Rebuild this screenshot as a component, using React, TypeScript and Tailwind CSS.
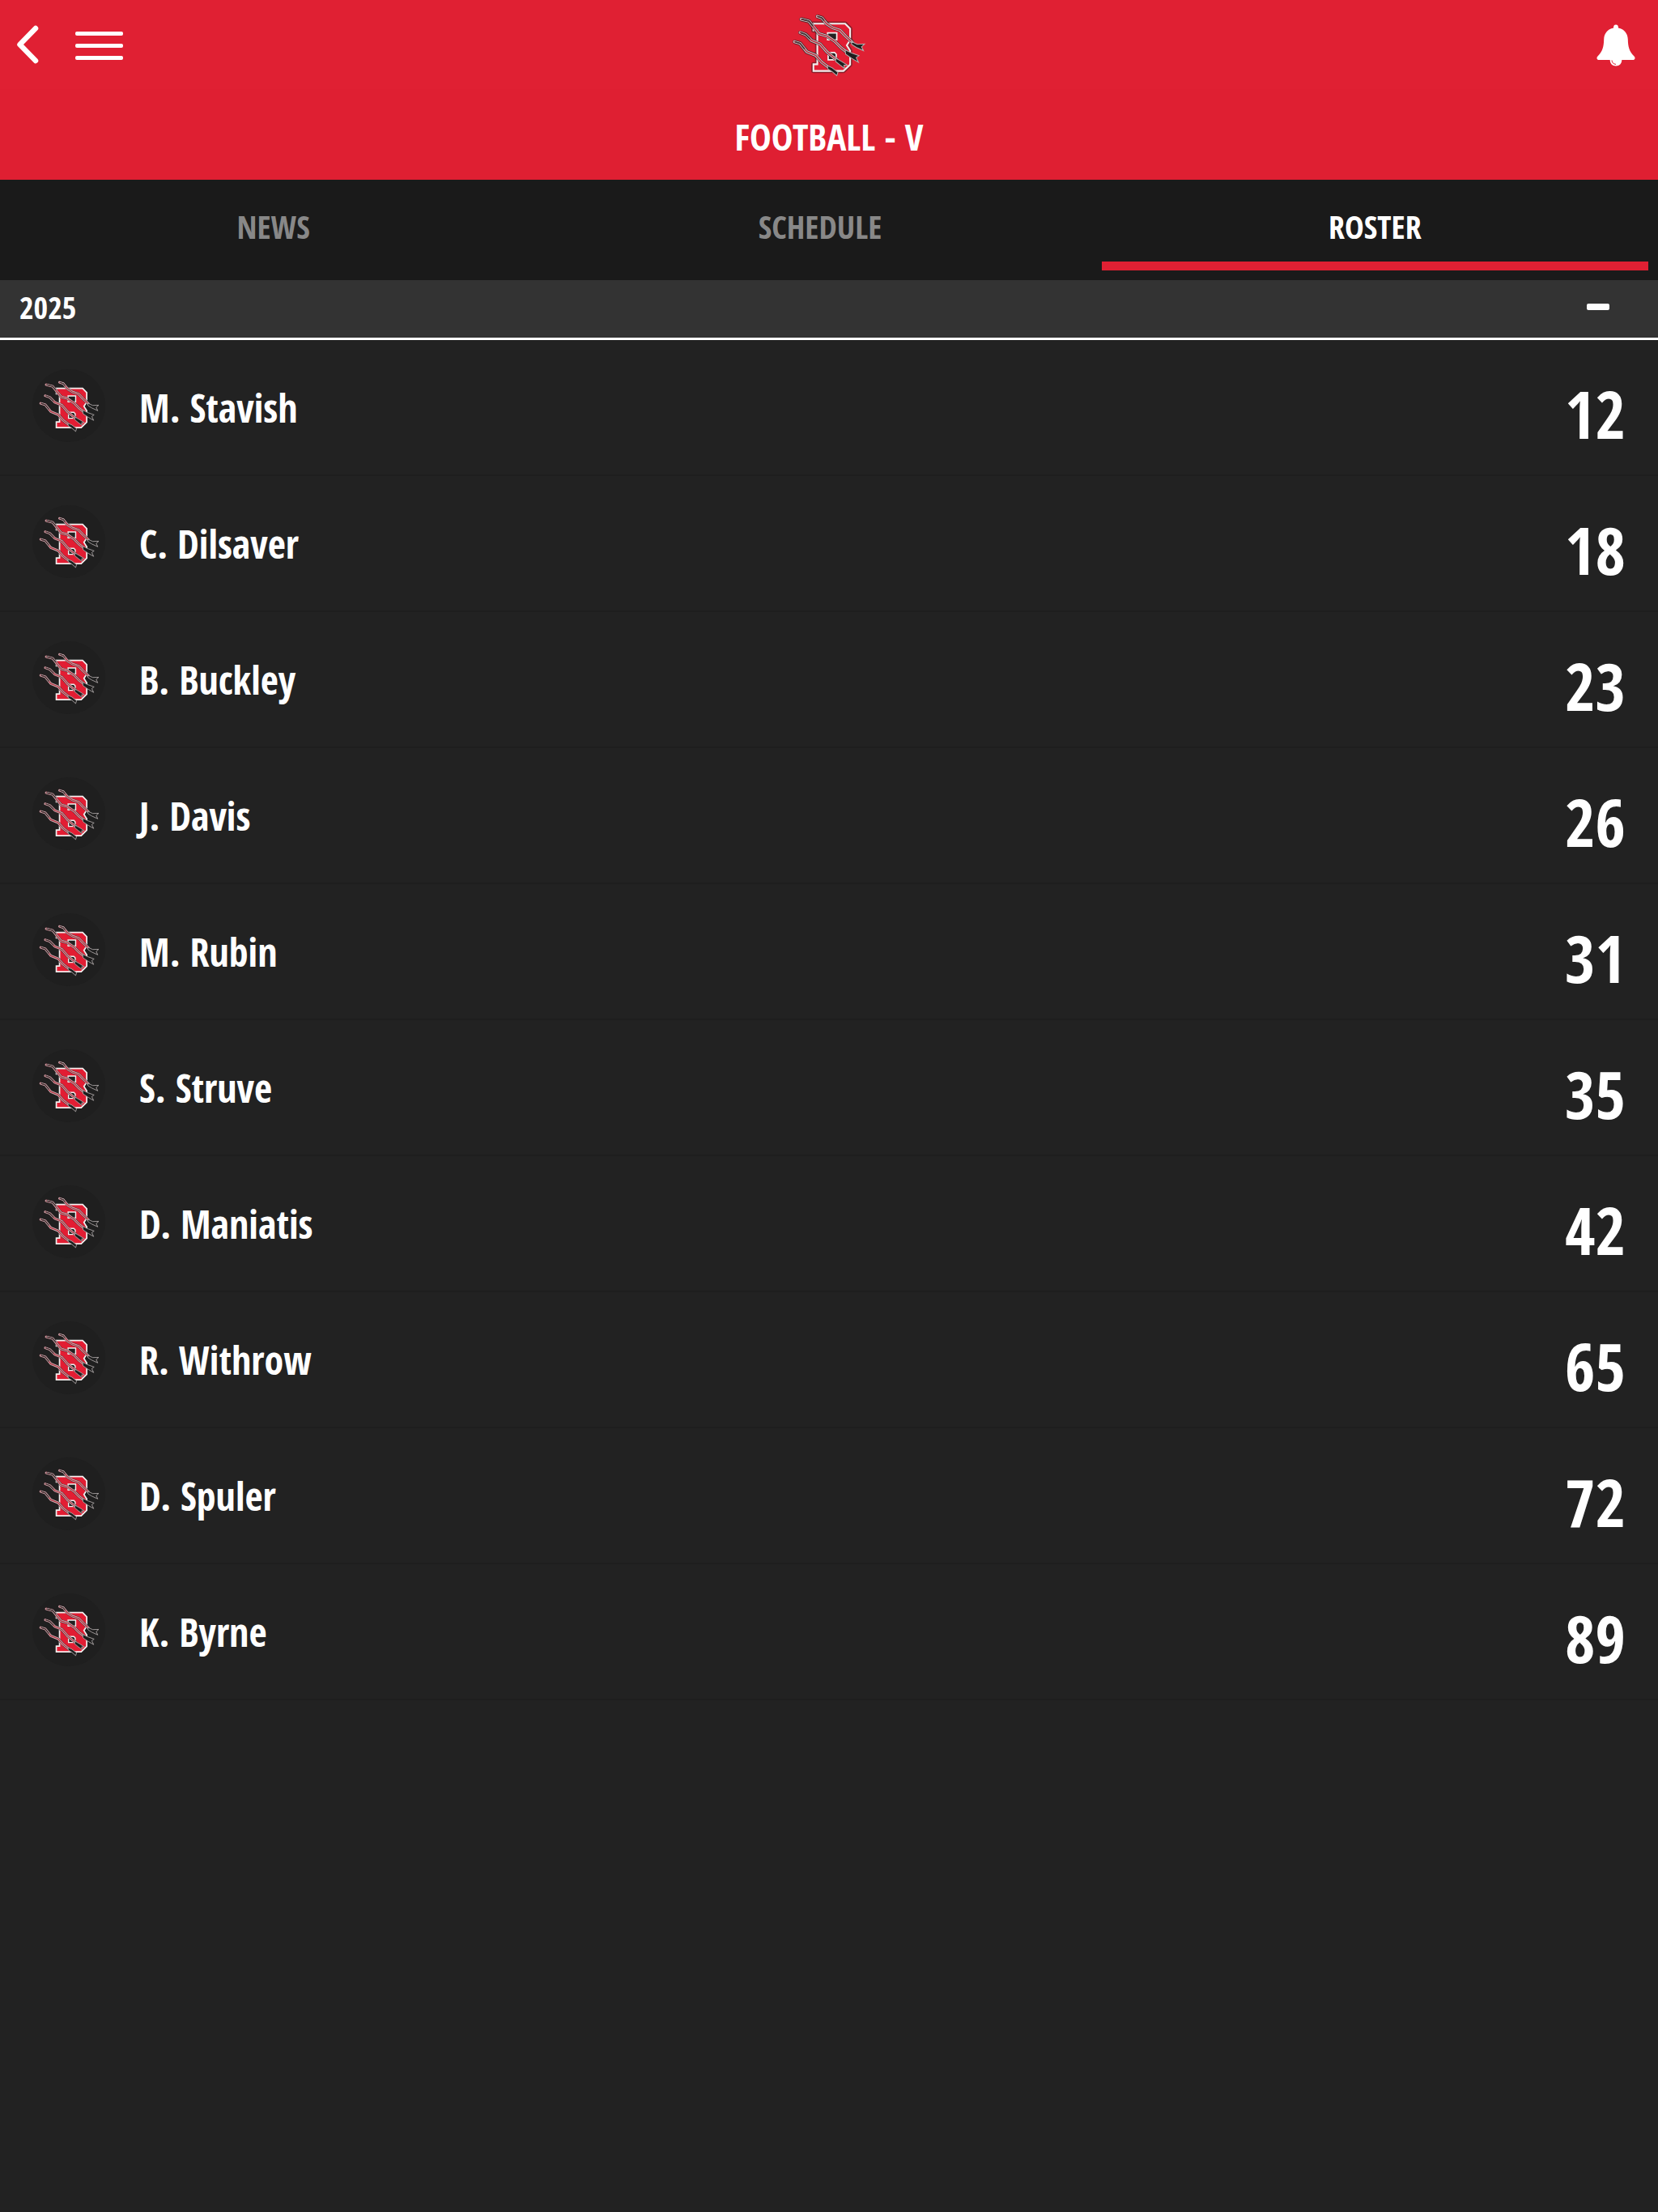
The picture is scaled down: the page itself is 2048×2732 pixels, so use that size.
import React from "react";

interface Player {
  name: string;
  number: number;
}

const players: Player[] = [
  { name: "M. Stavish", number: 12 },
  { name: "C. Dilsaver", number: 18 },
  { name: "B. Buckley", number: 23 },
  { name: "J. Davis", number: 26 },
  { name: "M. Rubin", number: 31 },
  { name: "S. Struve", number: 35 },
  { name: "D. Maniatis", number: 42 },
  { name: "R. Withrow", number: 65 },
  { name: "D. Spuler", number: 72 },
  { name: "K. Byrne", number: 89 },
];

// claw marks across the letter, and their dark torn ends
const scratches = [
  "M150 63 L166 68 L184 90 L205 104 L232 113 L252 134 L276 156",
  "M92 73 L120 80 L136 100 L156 125 L186 134 L212 152 L236 176 L254 190",
  "M88 121 L108 128 L130 150 L160 162 L184 190 L208 210 L220 218",
  "M68 154 L88 160 L112 190 L144 203 L166 228 L190 246",
];

const tips = [
  "M272 153 L294 163 L320 162 L309 172 L316 186 L290 174 L274 164 Z",
  "M250 183 L272 194 L300 204 L290 211 L298 228 L274 214 L252 199 Z",
  "M216 213 L236 224 L258 238 L246 238 L248 250 L232 238 L216 225 Z",
  "M186 240 L204 248 L224 264 L220 276 L204 262 L188 252 Z",
];

const letter = "M136 89 H250 L268 107 V148 L256 167 L268 186 V236 L244 259 H136 V235 H150 V113 H136 Z";

const TeamLogo: React.FC<{ className: string }> = ({ className }) => (
  <svg viewBox="58 48 268 232" className={className} fill="none" aria-hidden="true">
    <g stroke="#222" strokeOpacity="0.45" strokeWidth="16" strokeLinejoin="round">
      <path d={letter} />
      {scratches.map((d) => (
        <path key={d} d={d} />
      ))}
    </g>
    <path d={letter} fill="#e21d33" stroke="#f2efef" strokeWidth="6" />
    <path d="M187 122 H220 V147 H187 Z M189 193 H212 L218 199 V219 H189 Z" fill="#222" stroke="#f2efef" strokeWidth="5" />
    <g strokeLinejoin="round" strokeLinecap="round">
      {scratches.map((d) => (
        <path key={d} d={d} stroke="#4a1f27" strokeWidth="13" />
      ))}
      {scratches.map((d) => (
        <path key={d} d={d} stroke="#c4bebe" strokeWidth="10" />
      ))}
      {scratches.map((d) => (
        <path key={d} d={d} stroke="#b82839" strokeWidth="4" />
      ))}
    </g>
    <path
      d="M94 73 L120 80 L134 97 M90 121 L108 128 L124 144 M70 154 L88 160 L104 180 M152 63 L166 68 L174 78"
      stroke="#333"
      strokeWidth="4"
    />
    {tips.map((d) => (
      <path key={d} d={d} fill="#1d1d1d" stroke="#b3adad" strokeWidth="3" />
    ))}
  </svg>
);

const Header: React.FC = () => (
  <header className="text-white">
    <div className="grid h-[110px] grid-cols-3 items-center bg-[#e02033]">
      <div className="flex items-center gap-10 pl-[18px]">
        <button type="button" aria-label="Back">
          <svg viewBox="0 0 32 52" className="h-[52px] w-8" fill="none" stroke="currentColor" strokeWidth="6.500" strokeLinecap="round" strokeLinejoin="round">
            <path d="M26 6 L6.500 26 L26 46" />
          </svg>
        </button>
        <button type="button" aria-label="Menu" className="flex flex-col gap-2.5 pt-0.5 pl-[3px]">
          <span className="h-[5px] w-[59px] rounded-xs bg-white" />
          <span className="h-[5px] w-[59px] rounded-xs bg-white" />
          <span className="h-[5px] w-[59px] rounded-xs bg-white" />
        </button>
      </div>
      <TeamLogo className="h-20 w-[92px] justify-self-center" />
      <button type="button" aria-label="Notifications" className="mr-7 justify-self-end pt-0.5">
        <svg viewBox="0 0 48 52" className="h-[52px] w-12">
          <path
            d="M24 0.500 C26.200 0.500 27 2 27 4.500 C34.500 6 38.600 11.500 38.800 18.500 C39 28 40.500 33.500 46.500 39.500 C48.500 41.500 47.500 44 44.500 44 H31.300 C31.300 48.500 28.500 51.500 24 51.500 C19.500 51.500 16.700 48.500 16.700 44 H3.500 C0.500 44 -0.500 41.500 1.500 39.500 C7.500 33.500 9 28 9.200 18.500 C9.400 11.500 13.500 6 21 4.500 C21 2 21.800 0.500 24 0.500 Z"
            fill="white"
          />
          <path d="M19 44.500 C19.200 47.500 21 49.200 24 49.400" fill="none" stroke="#e02033" strokeWidth="1" />
        </svg>
      </button>
    </div>
    <div className="flex h-28 items-center justify-center bg-[#df1f32] pt-1">
      <h1 className="text-[45px] leading-none font-bold">FOOTBALL - V</h1>
    </div>
  </header>
);

const Tabs: React.FC = () => (
  <nav className="flex h-[124px] bg-[#1a1a1a] pr-3 pb-3 text-[40px] leading-none font-bold text-[#888]">
    <a href="#news" className="flex flex-1 items-center justify-center pt-1">
      NEWS
    </a>
    <a href="#schedule" className="flex flex-1 items-center justify-center pt-1">
      SCHEDULE
    </a>
    <a
      href="#roster"
      aria-current="page"
      className="ml-2.5 flex flex-1 items-center justify-center border-b-[11px] border-[#e02033] pt-[15px] text-white"
    >
      ROSTER
    </a>
  </nav>
);

const PlayerRow: React.FC<{ player: Player }> = ({ player }) => (
  <li className="flex h-[168px] items-center border-b-2 border-[#1e1e1e] px-10">
    <div className="mb-1 flex size-[90px] items-center justify-center rounded-full bg-[#1f1f1f]">
      <TeamLogo className="h-[66px] w-[77px]" />
    </div>
    <span className="ml-[42px] flex-1 pt-0.5 text-[48px] leading-none font-bold">{player.name}</span>
    <span className="pt-3.5 text-[81px] leading-none font-bold">{player.number}</span>
  </li>
);

export default function App() {
  return (
    <div className="min-h-screen bg-[#222] font-['Open_Sans_Condensed','Noto_Sans_Condensed','Open_Sans',sans-serif] text-white">
      <Header />
      <Tabs />
      <main>
        <button
          type="button"
          aria-expanded="true"
          className="flex h-[74px] w-full items-center justify-between border-b-3 border-white bg-[#333] pr-[60px] pb-1.5 pl-6 text-[38px] leading-none font-bold"
        >
          2025
          <span className="h-2 w-7 rounded-xs bg-white" />
        </button>
        <ul>
          {players.map((player) => (
            <PlayerRow key={player.number} player={player} />
          ))}
        </ul>
      </main>
    </div>
  );
}
